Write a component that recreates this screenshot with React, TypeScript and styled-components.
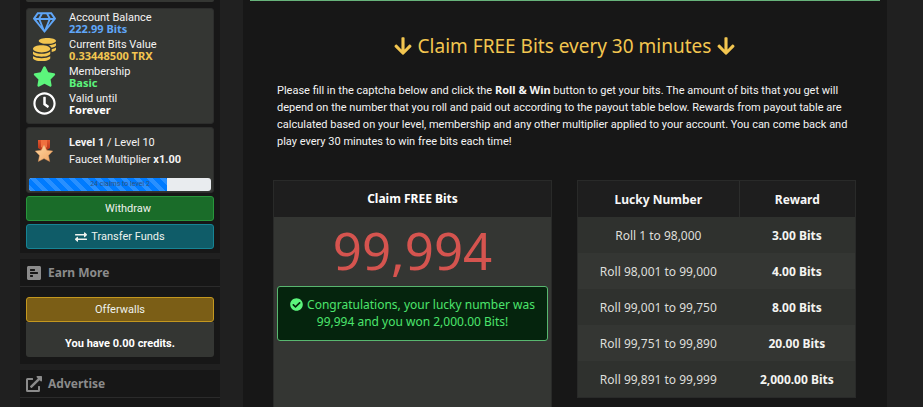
import React from "react";
import styled, { createGlobalStyle, css } from "styled-components";
import {
  FaArrowDown,
  FaCheckCircle,
  FaCoins,
  FaExchangeAlt,
  FaExternalLinkAlt,
  FaPollH,
  FaRegClock,
  FaRegGem,
  FaStar,
} from "react-icons/fa";

const displayFont = `"Noto Sans", sans-serif`;
const compactFont = `Roboto, sans-serif`;

const GlobalStyle = createGlobalStyle`
  *, *::before, *::after { box-sizing: border-box; }
  body {
    margin: 0;
    background: #202020;
    color: #f4f4f4;
    font-family: ${displayFont};
    font-size: 12px;
  }
  strong { font-family: ${displayFont}; }
`;

const Page = styled.div`
  height: 100vh;
  overflow: hidden;
  padding: 0 36px 0 20px;
  display: grid;
  grid-template-columns: 200px minmax(0, 1fr);
  gap: 23px;
`;

const Sidebar = styled.aside`
  display: flex;
  flex-direction: column;
  gap: 6px;
`;

const Section = styled.section`
  flex: none;
  background: #171717;
`;

const AccountBody = styled.div`
  display: flex;
  flex-direction: column;
  gap: 3px;
  padding: 0 6px 4px;
`;

const PanelEdge = styled.div`
  height: 2px;
  margin-bottom: 3px;
  border-radius: 0 0 3px 3px;
  background: #343633;
`;

const Panel = styled.div`
  background: #343633;
  border: 1px solid #2c2d2c;
  border-radius: 3px;
`;

const Stats = styled(Panel)`
  padding: 0 5px 6px;
`;

const Stat = styled.div`
  display: grid;
  grid-template-columns: 24px 1fr;
  column-gap: 13px;
  align-items: center;
  height: 27px;
`;

const StatIcon = styled.span<{ $color: string }>`
  display: flex;
  justify-content: center;
  color: ${(p) => p.$color};
`;

const StatText = styled.div`
  font-family: ${compactFont};
  font-size: 11px;
  line-height: 11px;
`;

const StatValue = styled.strong<{ $color: string }>`
  display: block;
  color: ${(p) => p.$color};
`;

const LevelPanel = styled(Panel)`
  padding: 6px 2px 1px;
`;

const LevelRow = styled.div`
  display: grid;
  grid-template-columns: 24px 1fr;
  column-gap: 13px;
  align-items: center;
  padding: 0 3px;
  margin-bottom: 10px;
  font-family: ${compactFont};
  font-size: 11px;
  line-height: 17px;

  strong { font-family: ${compactFont}; }
`;

const Progress = styled.div`
  position: relative;
  height: 13px;
  overflow: hidden;
  border-radius: 3px;
  background: #e9ecef;
`;

const ProgressFill = styled.div`
  height: 100%;
  background-color: #007bff;
  background-image: linear-gradient(
    45deg,
    rgba(255, 255, 255, 0.16) 25%,
    transparent 25%,
    transparent 50%,
    rgba(255, 255, 255, 0.16) 50%,
    rgba(255, 255, 255, 0.16) 75%,
    transparent 75%
  );
  background-size: 13px 13px;
`;

const ProgressLabel = styled.span`
  position: absolute;
  inset: 0;
  text-align: center;
  font-family: ${compactFont};
  font-size: 7px;
  line-height: 13px;
  color: #31547c;
`;

const tones = {
  green: css`background: #1a6c29; border-color: #28963c;`,
  teal: css`background: #0f5c68; border-color: #168495;`,
  gold: css`background: #7b5e16; border-color: #c4981f;`,
};

const ActionButton = styled.button<{ $tone: keyof typeof tones }>`
  display: flex;
  align-items: center;
  justify-content: center;
  gap: 4px;
  width: 100%;
  height: 25px;
  padding: 0;
  border: 1px solid;
  border-radius: 3px;
  color: #eef2ee;
  font-family: ${compactFont};
  font-size: 11px;
  cursor: pointer;
  ${(p) => tones[p.$tone]}
`;

const IconSlot = styled.span`
  width: 12px;
`;

const SectionTitle = styled.h2`
  display: flex;
  align-items: center;
  gap: 6px;
  height: 28px;
  margin: 0;
  padding: 0 6px;
  border-bottom: 1px solid #2b2b2b;
  color: #8b8b8b;
  font-size: 12px;
  font-weight: 700;
`;

const EarnBody = styled.div`
  padding: 10px 6px 7px;
`;

const Credits = styled.div`
  height: 35px;
  padding-top: 13px;
  border-radius: 0 0 3px 3px;
  background: #343633;
  text-align: center;
  font-family: ${compactFont};
  font-size: 11px;
  line-height: 18px;
  font-weight: 700;
  color: #fff;
`;

const Main = styled.main`
  padding: 0 31px 0 30px;
  background: #171717;
`;

const NoticeEdge = styled.div`
  height: 1px;
  margin: 0 -24px 0 -23px;
  background: #67b37b;
`;

const Heading = styled.h1`
  display: flex;
  align-items: center;
  justify-content: center;
  gap: 5px;
  margin: 31px 0 21px;
  color: #f3c650;
  font-size: 19px;
  line-height: 28px;
  font-weight: 400;
`;

const Intro = styled.p`
  margin: 0;
  padding: 0 4px;
  font-family: ${compactFont};
  font-size: 11px;
  line-height: 17px;
`;

const Columns = styled.div`
  display: grid;
  grid-template-columns: 1fr 1fr;
  gap: 25px;
  margin-top: 30px;
`;

const ClaimCard = styled.section`
  min-height: 300px;
  border: 1px solid #292a29;
  background: #343633;
`;

const CardTitle = styled.h2`
  margin: 0;
  background: #1e1e1e;
  color: #fff;
  text-align: center;
  font-size: 12px;
  line-height: 36px;
`;

const Rolled = styled.output`
  display: block;
  text-align: center;
  color: #d5544f;
  font-size: 51px;
  line-height: 66px;
`;

const Alert = styled.div`
  margin: 3px 3px 0;
  padding: 9px 10px 10px;
  border: 1px solid #58b76f;
  border-radius: 3px;
  background: #05240d;
  color: #4ce46c;
  text-align: center;
  font-size: 12px;
  line-height: 17px;

  svg {
    margin-right: 4px;
    vertical-align: -2px;
    color: #5cf57c;
  }
`;

const PayoutTable = styled.table`
  width: 100%;
  border-spacing: 0;
  border: 1px solid #292a29;
  align-self: start;
  text-align: center;
  font-size: 12px;
  line-height: 16px;

  th, td { height: 36px; padding: 2px 0 0; }
  thead th { background: #1e1e1e; color: #f7f7f7; }
  thead th + th { border-left: 1px solid #2c2d2c; }
  th:first-child { width: 58%; }
  tbody { color: #dededb; }
  tbody tr { background: #343633; }
  tbody tr:nth-child(odd) { background: #2f312e; }
  tbody td:last-child { font-weight: 700; color: #f4f4f1; }
`;

const MedalDrawing = styled.svg`
  justify-self: center;
`;

const Medal = () => (
  <MedalDrawing width="18" height="24" viewBox="0 0 18 24" aria-hidden="true">
    <defs>
      <linearGradient id="ribbon" x1="0" y1="0" x2="0" y2="1">
        <stop offset="0" stopColor="#e4572d" />
        <stop offset="1" stopColor="#a52b17" />
      </linearGradient>
      <linearGradient id="bronze" x1="0" y1="0" x2="1" y2="1">
        <stop offset="0" stopColor="#ffd9a4" />
        <stop offset="1" stopColor="#f0a463" />
      </linearGradient>
    </defs>
    <path d="M3 1h12v8l-6 4-6-4z" fill="url(#ribbon)" />
    <path d="M6 1h6v7l-3 2-3-2z" fill="#f0703f" />
    <path
      d="M9 6l2.8 5.3 6 .8-4.3 4.3 1.2 6.1L9 19.6l-5.7 2.9 1.2-6.1L.2 12.1l6-.8z"
      fill="url(#bronze)"
      stroke="#e09555"
      strokeWidth=".4"
    />
  </MedalDrawing>
);

const stats = [
  { label: "Account Balance", value: "222.99 Bits", color: "#5fa6f8", Icon: FaRegGem },
  { label: "Current Bits Value", value: "0.33448500 TRX", color: "#f3c650", Icon: FaCoins },
  { label: "Membership", value: "Basic", color: "#5cf57c", Icon: FaStar },
  { label: "Valid until", value: "Forever", color: "#ffffff", Icon: FaRegClock },
];

const payouts = [
  ["Roll 1 to 98,000", "3.00 Bits"],
  ["Roll 98,001 to 99,000", "4.00 Bits"],
  ["Roll 99,001 to 99,750", "8.00 Bits"],
  ["Roll 99,751 to 99,890", "20.00 Bits"],
  ["Roll 99,891 to 99,999", "2,000.00 Bits"],
];

const levelProgress = 76;

export default function App() {
  return (
    <>
      <GlobalStyle />
      <Page>
        <Sidebar>
          <Section>
            <AccountBody>
              <PanelEdge />
              <Stats>
                {stats.map(({ label, value, color, Icon }) => (
                  <Stat key={label}>
                    <StatIcon $color={color}>
                      <Icon size={23} />
                    </StatIcon>
                    <StatText>
                      {label}
                      <StatValue $color={color}>{value}</StatValue>
                    </StatText>
                  </Stat>
                ))}
              </Stats>
              <LevelPanel>
                <LevelRow>
                  <Medal />
                  <div>
                    <div><strong>Level 1</strong> / Level 10</div>
                    <div>Faucet Multiplier <strong>x1.00</strong></div>
                  </div>
                </LevelRow>
                <Progress
                  role="progressbar"
                  aria-label="Level progress"
                  aria-valuenow={levelProgress}
                  aria-valuemin={0}
                  aria-valuemax={100}
                >
                  <ProgressFill style={{ width: `${levelProgress}%` }} />
                  <ProgressLabel>24 claims to level 2</ProgressLabel>
                </Progress>
              </LevelPanel>
              <ActionButton $tone="green">
                <IconSlot />
                Withdraw
              </ActionButton>
              <ActionButton $tone="teal">
                <FaExchangeAlt size={12} />
                Transfer Funds
              </ActionButton>
            </AccountBody>
          </Section>

          <Section>
            <SectionTitle><FaPollH size={16} />Earn More</SectionTitle>
            <EarnBody>
              <ActionButton $tone="gold">Offerwalls</ActionButton>
              <Credits>You have 0.00 credits.</Credits>
            </EarnBody>
          </Section>

          <Section>
            <SectionTitle><FaExternalLinkAlt size={16} />Advertise</SectionTitle>
            <EarnBody />
          </Section>
        </Sidebar>

        <Main>
          <NoticeEdge />
          <Heading>
            <FaArrowDown size={20} />
            Claim FREE Bits every 30 minutes
            <FaArrowDown size={20} />
          </Heading>
          <Intro>
            Please fill in the captcha below and click the <strong>Roll &amp; Win</strong> button to
            get your bits. The amount of bits that you get will depend on the number that you roll
            and paid out according to the payout table below. Rewards from payout table are
            calculated based on your level, membership and any other multiplier applied to your
            account. You can come back and play every 30 minutes to win free bits each time!
          </Intro>
          <Columns>
            <ClaimCard>
              <CardTitle>Claim FREE Bits</CardTitle>
              <Rolled>99,994</Rolled>
              <Alert role="status">
                <FaCheckCircle size={13} />
                Congratulations, your lucky number was 99,994 and you won 2,000.00 Bits!
              </Alert>
            </ClaimCard>
            <PayoutTable>
              <thead>
                <tr><th scope="col">Lucky Number</th><th scope="col">Reward</th></tr>
              </thead>
              <tbody>
                {payouts.map(([range, reward]) => (
                  <tr key={range}><td>{range}</td><td>{reward}</td></tr>
                ))}
              </tbody>
            </PayoutTable>
          </Columns>
        </Main>
      </Page>
    </>
  );
}
